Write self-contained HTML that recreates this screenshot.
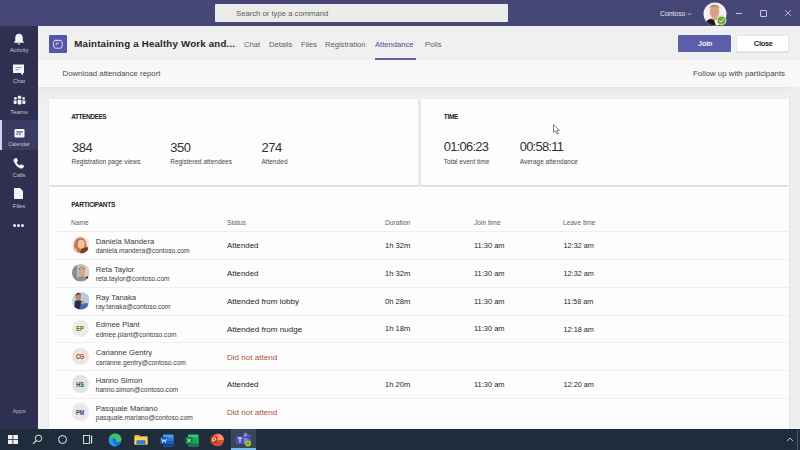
<!DOCTYPE html>
<html><head><meta charset="utf-8"><style>
html,body{margin:0;padding:0;width:800px;height:450px;overflow:hidden;background:#f3f2f1;}
body{position:relative;font-family:"Liberation Sans",sans-serif;}
.t{position:absolute;white-space:nowrap;line-height:1;}
.r{position:absolute;}
</style></head><body>
<div class="r" style="left:0px;top:0px;width:800px;height:26px;background:#454675;"></div>
<div class="r" style="left:215px;top:4px;width:293px;height:18px;background:#ebebeb;border-radius:1px;"></div>
<div class="t" style="left:236px;top:9.98px;font-size:7.7px;color:#5c5c5c;font-weight:400;">Search or type a command</div>
<div class="t" style="left:660px;top:10.54px;font-size:6.8px;color:#e6e6f2;font-weight:400;">Contoso</div>
<svg class="r" style="left:687px;top:12px" width="5" height="4" viewBox="0 0 5 4"><path d="M0.5 1 L2.5 3 L4.5 1" stroke="#d4d4e8" stroke-width="0.7" fill="none"/></svg>
<svg class="r" style="left:702.5px;top:1.5px" width="24" height="24" viewBox="0 0 24 24"><defs><clipPath id="av"><circle cx="12" cy="12" r="11.5"/></clipPath></defs><g clip-path="url(#av)"><rect width="24" height="24" fill="#f4f1ef"/><ellipse cx="11.5" cy="10" rx="4.8" ry="6" fill="#dca083"/><path d="M6.5 7 Q7 2.5 11.5 2.8 Q16 2.5 16.5 7 Q14.5 4.5 11.5 4.8 Q8.5 4.5 6.5 7Z" fill="#b9876a"/><path d="M2 24 L4 18.5 Q8 15.5 11 17.5 L13 24 Z" fill="#1f1a1a"/><path d="M9 15 Q11.5 17.5 14.5 15 L15 18 L9.5 18 Z" fill="#d49a7c"/></g></svg>
<svg class="r" style="left:715.5px;top:14.5px" width="11" height="11" viewBox="0 0 11 11"><circle cx="5.5" cy="5.5" r="5" fill="#cfd9a8"/><circle cx="5.5" cy="5.5" r="3.8" fill="#6bae3a"/><path d="M3.6 5.6 L5 7 L7.6 4.2" stroke="#f0f0e0" stroke-width="0.9" fill="none"/></svg>
<div class="r" style="left:736px;top:13px;width:6px;height:1px;background:#c8c8dc;"></div>
<div class="r" style="left:760px;top:10px;width:7px;height:7px;background:transparent;border:0.8px solid #c8c8dc;box-sizing:border-box;border-radius:1px;"></div>
<svg class="r" style="left:784px;top:9px" width="8" height="8" viewBox="0 0 8 8"><path d="M1 1 L7 7 M7 1 L1 7" stroke="#d0d0e2" stroke-width="0.8"/></svg>
<div class="r" style="left:0px;top:26px;width:38px;height:403px;background:#2f304f;"></div>
<div class="r" style="left:2px;top:120px;width:36px;height:30px;background:#3a3b60;"></div>
<div class="r" style="left:0px;top:120px;width:2px;height:30px;background:#d0d1f4;"></div>
<div class="t" style="left:19px;transform:translateX(-50%);top:48.01px;font-size:5.9px;color:#c4c4d8;font-weight:400;">Activity</div>
<div class="t" style="left:19px;transform:translateX(-50%);top:79.01px;font-size:5.9px;color:#c4c4d8;font-weight:400;">Chat</div>
<div class="t" style="left:19px;transform:translateX(-50%);top:110.01px;font-size:5.9px;color:#c4c4d8;font-weight:400;">Teams</div>
<div class="t" style="left:19px;transform:translateX(-50%);top:142.47px;font-size:5.35px;color:#c4c4d8;font-weight:400;">Calendar</div>
<div class="t" style="left:19px;transform:translateX(-50%);top:173.01px;font-size:5.9px;color:#c4c4d8;font-weight:400;">Calls</div>
<div class="t" style="left:19px;transform:translateX(-50%);top:204.01px;font-size:5.9px;color:#c4c4d8;font-weight:400;">Files</div>
<div class="t" style="left:19px;transform:translateX(-50%);top:408.79px;font-size:5.8px;color:#b4b4c8;font-weight:400;">Apps</div>
<svg class="r" style="left:13px;top:33px" width="12" height="13" viewBox="0 0 12 13"><path d="M6 0.8 C3.4 0.8 2.2 2.8 2.2 5.2 L2.2 7.8 L0.8 9.8 L11.2 9.8 L9.8 7.8 L9.8 5.2 C9.8 2.8 8.6 0.8 6 0.8 Z" fill="#f4f4f8"/><path d="M4.3 10.6 Q6 12.8 7.7 10.6 Z" fill="#f4f4f8"/></svg>
<svg class="r" style="left:12px;top:63px" width="13" height="14" viewBox="0 0 13 14"><path d="M1 1.5 L12 1.5 L12 10 L11 10 L11 12.5 L8.5 10 L1 10 Z" fill="#f4f4f8"/><rect x="3.5" y="4" width="6" height="1" fill="#9a9ab5"/><rect x="3.5" y="6.2" width="4" height="1" fill="#9a9ab5"/></svg>
<svg class="r" style="left:13px;top:95px" width="13" height="11" viewBox="0 0 13 11"><circle cx="6.5" cy="2.2" r="1.8" fill="#f4f4f8"/><circle cx="2.4" cy="3.4" r="1.4" fill="#f4f4f8"/><circle cx="10.6" cy="3.4" r="1.4" fill="#f4f4f8"/><path d="M4.6 4.8 L8.4 4.8 L8.4 8.8 Q6.5 10.8 4.6 8.8 Z" fill="#f4f4f8"/><path d="M0.6 5.6 L3.6 5.6 L3.6 8.6 Q2 9.8 0.6 8.2 Z" fill="#f4f4f8"/><path d="M9.4 5.6 L12.4 5.6 L12.4 8.2 Q11 9.8 9.4 8.6 Z" fill="#f4f4f8"/></svg>
<svg class="r" style="left:13.5px;top:127.5px" width="11" height="10" viewBox="0 0 11 10"><rect x="0.5" y="1" width="10" height="8.6" rx="1.3" fill="#f4f4f8"/><rect x="2.4" y="3.4" width="6.2" height="1.1" fill="#3a3b60"/><rect x="2.4" y="5.6" width="1.8" height="1.1" fill="#3a3b60"/><rect x="5" y="5.6" width="1.8" height="1.1" fill="#3a3b60"/></svg>
<svg class="r" style="left:12px;top:157px" width="13" height="13" viewBox="0 0 13 13"><path d="M2.5 1.5 L4.8 1 L6 4 L4.6 5.2 Q5.6 7.6 7.8 8.6 L9 7.2 L12 8.6 L11.4 10.8 Q10.4 12 8.6 11.4 Q3.4 9.4 1.6 4 Q1.2 2.4 2.5 1.5 Z" fill="#f4f4f8"/></svg>
<svg class="r" style="left:13px;top:187px" width="11" height="13" viewBox="0 0 11 13"><path d="M1 1 L7 1 L10 4 L10 12 L1 12 Z" fill="#f4f4f8"/></svg>
<div class="r" style="left:13.0px;top:224px;width:3px;height:3px;border-radius:50%;background:#f4f4f8"></div>
<div class="r" style="left:17.2px;top:224px;width:3px;height:3px;border-radius:50%;background:#f4f4f8"></div>
<div class="r" style="left:21.4px;top:224px;width:3px;height:3px;border-radius:50%;background:#f4f4f8"></div>
<div class="r" style="left:38px;top:26px;width:762px;height:403px;background:#f0f0f0;"></div>
<div class="r" style="left:38px;top:26px;width:762px;height:34px;background:#f0f0f0;"></div>
<div class="r" style="left:49px;top:35px;width:17.5px;height:17.5px;background:#5457a8;border-radius:1px;"></div>
<svg class="r" style="left:49px;top:35px" width="18" height="18" viewBox="0 0 18 18"><rect x="4.6" y="5.4" width="8.6" height="7.8" rx="2" fill="none" stroke="#e6e4f4" stroke-width="0.9"/><path d="M7 4.6 L7 6.2 M10.8 4.6 L10.8 6.2" stroke="#e6e4f4" stroke-width="0.9"/><path d="M7.2 8.2 L7.2 10.4 M7.2 8.2 L10.2 8.2" stroke="#e6e4f4" stroke-width="0.8"/></svg>
<div class="t" style="left:74.3px;top:38.99px;font-size:9.7px;color:#252423;font-weight:700;letter-spacing:0.2px;">Maintaining a Healthy Work and...</div>
<div class="t" style="left:244px;top:40.87px;font-size:7.6px;color:#616161;font-weight:400;">Chat</div>
<div class="t" style="left:269px;top:40.87px;font-size:7.6px;color:#616161;font-weight:400;">Details</div>
<div class="t" style="left:301px;top:40.87px;font-size:7.6px;color:#616161;font-weight:400;">Files</div>
<div class="t" style="left:325px;top:40.87px;font-size:7.6px;color:#616161;font-weight:400;">Registration</div>
<div class="t" style="left:375px;top:40.87px;font-size:7.6px;color:#4b4d8a;font-weight:400;">Attendance</div>
<div class="t" style="left:425px;top:40.87px;font-size:7.6px;color:#616161;font-weight:400;">Polls</div>
<div class="r" style="left:375px;top:58px;width:41px;height:2px;background:#6264a7;"></div>
<div class="r" style="left:678px;top:35px;width:53px;height:17px;background:#5b5ea8;border-radius:1px;"></div>
<div class="t" style="left:705.2px;transform:translateX(-50%);top:40.31px;font-size:7.2px;color:#f4f4ff;font-weight:700;letter-spacing:-0.15px;">Join</div>
<div class="r" style="left:736px;top:35px;width:53px;height:17px;background:#ffffff;border:1px solid #e6e6e6;box-sizing:border-box;border-radius:1px;box-shadow:0 1px 1px rgba(0,0,0,0.08);"></div>
<div class="t" style="left:763.2px;transform:translateX(-50%);top:40.05px;font-size:7.5px;color:#252423;font-weight:700;letter-spacing:-0.35px;">Close</div>
<div class="r" style="left:38px;top:60px;width:762px;height:27px;background:#f8f8f9;"></div>
<div class="t" style="left:62.5px;top:70.40px;font-size:7.8px;color:#4a4948;font-weight:400;">Download attendance report</div>
<div class="t" style="right:15px;top:70.35px;font-size:7.85px;color:#4a4948;font-weight:400;">Follow up with participants</div>
<div class="r" style="left:38px;top:87px;width:762px;height:342px;background:linear-gradient(#e2e2e2 0px,#eaeaea 2px,#eeeeee 6px,#efefef 12px,#f0f0f0 20px);"></div>
<div class="r" style="left:789px;top:87px;width:11px;height:342px;background:#eeeeee;"></div>
<div class="r" style="left:49px;top:99px;width:369px;height:86px;background:#fdfdfd;box-shadow:0 1px 2px rgba(0,0,0,0.12);"></div>
<div class="r" style="left:421px;top:99px;width:368px;height:86px;background:#fdfdfd;box-shadow:0 1px 2px rgba(0,0,0,0.12);"></div>
<div class="r" style="left:49px;top:187px;width:740px;height:242px;background:#fdfdfd;box-shadow:0 1px 2px rgba(0,0,0,0.12);"></div>
<div class="t" style="left:71.2px;top:114.40px;font-size:6.5px;color:#252423;font-weight:700;letter-spacing:-0.42px;">ATTENDEES</div>
<div class="t" style="left:443.8px;top:114.20px;font-size:6.5px;color:#252423;font-weight:700;letter-spacing:-0.33px;">TIME</div>
<div class="t" style="left:72px;top:141.20px;font-size:13.0px;color:#323130;font-weight:400;letter-spacing:-0.5px;">384</div>
<div class="t" style="left:71.5px;top:158.50px;font-size:6.5px;color:#484644;font-weight:400;">Registration page views</div>
<div class="t" style="left:170.2px;top:141.20px;font-size:13.0px;color:#323130;font-weight:400;letter-spacing:-0.5px;">350</div>
<div class="t" style="left:170.2px;top:158.50px;font-size:6.5px;color:#484644;font-weight:400;">Registered attendees</div>
<div class="t" style="left:261.5px;top:141.20px;font-size:13.0px;color:#323130;font-weight:400;letter-spacing:-0.5px;">274</div>
<div class="t" style="left:261.5px;top:158.50px;font-size:6.5px;color:#484644;font-weight:400;">Attended</div>
<div class="t" style="left:443.8px;top:141.28px;font-size:12.9px;color:#323130;font-weight:400;letter-spacing:-0.72px;">01:06:23</div>
<div class="t" style="left:443.8px;top:158.50px;font-size:6.5px;color:#484644;font-weight:400;">Total event time</div>
<div class="t" style="left:519.7px;top:141.28px;font-size:12.9px;color:#323130;font-weight:400;letter-spacing:-0.72px;">00:58:11</div>
<div class="t" style="left:519.7px;top:158.50px;font-size:6.5px;color:#484644;font-weight:400;">Average attendance</div>
<div class="t" style="left:71.3px;top:202.10px;font-size:6.5px;color:#252423;font-weight:700;letter-spacing:-0.28px;">PARTICIPANTS</div>
<div class="t" style="left:71px;top:219.87px;font-size:6.65px;color:#605e5c;font-weight:400;">Name</div>
<div class="t" style="left:227px;top:219.87px;font-size:6.65px;color:#605e5c;font-weight:400;">Status</div>
<div class="t" style="left:385px;top:219.87px;font-size:6.65px;color:#605e5c;font-weight:400;">Duration</div>
<div class="t" style="left:474px;top:219.87px;font-size:6.65px;color:#605e5c;font-weight:400;">Join time</div>
<div class="t" style="left:563px;top:219.87px;font-size:6.65px;color:#605e5c;font-weight:400;">Leave time</div>
<div class="r" style="left:56px;top:231px;width:733px;height:1px;background:#eeeeee;"></div>
<svg class="r" style="left:71.5px;top:236.4px" width="17.5" height="17.5" viewBox="0 0 18 18"><defs><clipPath id="c0"><circle cx="9" cy="9" r="9"/></clipPath></defs><g clip-path="url(#c0)"><rect width="18" height="18" fill="#eee6e2"/><ellipse cx="8.5" cy="9.5" rx="6.5" ry="8" fill="#c27a4c"/><ellipse cx="9.5" cy="8.5" rx="3.6" ry="4.6" fill="#f0c4a4"/><path d="M3 6 Q9 0 15 6 L13 4 Q9 2 5 4 Z" fill="#c77a48"/><path d="M10 13 L16 11 L18 18 L8 18 Z" fill="#7a3e22"/><path d="M0 12 L5 13 L4 18 L0 18Z" fill="#d9c4b4"/></g></svg>
<div class="t" style="left:95.7px;top:237.98px;font-size:7.7px;color:#3b3a39;font-weight:400;">Daniela Mandera</div>
<div class="t" style="left:95.7px;top:248.47px;font-size:6.65px;color:#403f3e;font-weight:400;">daniela.mandera@contoso.com</div>
<div class="t" style="left:227px;top:241.85px;font-size:7.85px;color:#252423;font-weight:400;">Attended</div>
<div class="t" style="left:385px;top:241.97px;font-size:7.6px;color:#252423;font-weight:400;">1h 32m</div>
<div class="t" style="left:474px;top:242.09px;font-size:7.45px;color:#252423;font-weight:400;">11:30 am</div>
<div class="t" style="left:563.5px;top:242.22px;font-size:7.3px;color:#252423;font-weight:400;">12:32 am</div>
<div class="r" style="left:56px;top:259px;width:733px;height:1px;background:#efefef;"></div>
<svg class="r" style="left:71.5px;top:264.2px" width="17.5" height="17.5" viewBox="0 0 18 18"><defs><clipPath id="c1"><circle cx="9" cy="9" r="9"/></clipPath></defs><g clip-path="url(#c1)"><rect width="18" height="18" fill="#bdbdbd"/><rect x="0" y="0" width="5" height="18" fill="#8a8a8a"/><rect x="13" y="3" width="5" height="9" fill="#cfcfcf"/><ellipse cx="10" cy="8.5" rx="3.3" ry="4.2" fill="#d8a285"/><path d="M6.5 6 Q10 1.5 13.5 6 L13 4.5 Q10 2.5 7 4.5 Z" fill="#3b2e2a"/><path d="M4 18 Q5 12.5 10 12.5 Q15 12.5 16 18 Z" fill="#8f8f8f"/><circle cx="15.5" cy="14" r="1.2" fill="#222"/></g></svg>
<div class="t" style="left:95.7px;top:265.78px;font-size:7.7px;color:#3b3a39;font-weight:400;">Reta Taylor</div>
<div class="t" style="left:95.7px;top:276.27px;font-size:6.65px;color:#403f3e;font-weight:400;">reta.taylor@contoso.com</div>
<div class="t" style="left:227px;top:269.65px;font-size:7.85px;color:#252423;font-weight:400;">Attended</div>
<div class="t" style="left:385px;top:269.77px;font-size:7.6px;color:#252423;font-weight:400;">1h 32m</div>
<div class="t" style="left:474px;top:269.89px;font-size:7.45px;color:#252423;font-weight:400;">11:30 am</div>
<div class="t" style="left:563.5px;top:270.02px;font-size:7.3px;color:#252423;font-weight:400;">12:32 am</div>
<div class="r" style="left:56px;top:287px;width:733px;height:1px;background:#efefef;"></div>
<svg class="r" style="left:71.5px;top:292.0px" width="17.5" height="17.5" viewBox="0 0 18 18"><defs><clipPath id="c2"><circle cx="9" cy="9" r="9"/></clipPath></defs><g clip-path="url(#c2)"><rect width="18" height="18" fill="#c9d3e0"/><rect x="10" y="0" width="8" height="10" fill="#b9c7da"/><ellipse cx="6.5" cy="5.5" rx="2.8" ry="3.2" fill="#b88a6c"/><path d="M3.5 4.5 Q6 0.5 9.5 3.5 L9 2 Q6 0 4 2.5 Z" fill="#2c2420"/><path d="M2 18 L3 9 Q7 7.5 11 9.5 L12 18 Z" fill="#26304a"/><path d="M9 12 L16 11 L17 18 L8 18 Z" fill="#4a68b8"/><ellipse cx="11" cy="11" rx="2" ry="1.6" fill="#c99878"/></g></svg>
<div class="t" style="left:95.7px;top:293.58px;font-size:7.7px;color:#3b3a39;font-weight:400;">Ray Tanaka</div>
<div class="t" style="left:95.7px;top:304.07px;font-size:6.65px;color:#403f3e;font-weight:400;">ray.tanaka@contoso.com</div>
<div class="t" style="left:227px;top:298.09px;font-size:8.05px;color:#252423;font-weight:400;">Attended from lobby</div>
<div class="t" style="left:385px;top:297.57px;font-size:7.6px;color:#252423;font-weight:400;">0h 28m</div>
<div class="t" style="left:474px;top:297.69px;font-size:7.45px;color:#252423;font-weight:400;">11:30 am</div>
<div class="t" style="left:563.5px;top:297.82px;font-size:7.3px;color:#252423;font-weight:400;">11:58 am</div>
<div class="r" style="left:56px;top:315px;width:733px;height:1px;background:#efefef;"></div>
<div class="r" style="left:71.5px;top:319.8px;width:17.5px;height:17.5px;border-radius:50%;background:#ebebeb"></div>
<div class="t" style="left:80.4px;top:326.14px;font-size:6.8px;color:#498205;font-weight:700;transform:translateX(-50%) scaleX(0.82);letter-spacing:-0.1px;">EP</div>
<div class="t" style="left:95.7px;top:321.38px;font-size:7.7px;color:#3b3a39;font-weight:400;">Edmee Plant</div>
<div class="t" style="left:95.7px;top:331.87px;font-size:6.65px;color:#403f3e;font-weight:400;">edmee.plant@contoso.com</div>
<div class="t" style="left:227px;top:325.89px;font-size:8.05px;color:#252423;font-weight:400;">Attended from nudge</div>
<div class="t" style="left:385px;top:325.37px;font-size:7.6px;color:#252423;font-weight:400;">1h 18m</div>
<div class="t" style="left:474px;top:325.49px;font-size:7.45px;color:#252423;font-weight:400;">11:30 am</div>
<div class="t" style="left:563.5px;top:325.62px;font-size:7.3px;color:#252423;font-weight:400;">12:18 am</div>
<div class="r" style="left:56px;top:342px;width:733px;height:1px;background:#efefef;"></div>
<div class="r" style="left:71.5px;top:347.6px;width:17.5px;height:17.5px;border-radius:50%;background:#f1e2dc"></div>
<div class="t" style="left:80.4px;top:353.94px;font-size:6.8px;color:#8e4a2a;font-weight:700;transform:translateX(-50%) scaleX(0.82);letter-spacing:-0.1px;">CG</div>
<div class="t" style="left:95.7px;top:349.18px;font-size:7.7px;color:#3b3a39;font-weight:400;">Carianne Gentry</div>
<div class="t" style="left:95.7px;top:359.67px;font-size:6.65px;color:#403f3e;font-weight:400;">carianne.gentry@contoso.com</div>
<div class="t" style="left:227px;top:353.69px;font-size:8.05px;color:#a8503a;font-weight:400;">Did not attend</div>
<div class="r" style="left:56px;top:370px;width:733px;height:1px;background:#efefef;"></div>
<div class="r" style="left:71.5px;top:375.4px;width:17.5px;height:17.5px;border-radius:50%;background:#e1e3e6"></div>
<div class="t" style="left:80.4px;top:381.74px;font-size:6.8px;color:#0b6a0b;font-weight:700;transform:translateX(-50%) scaleX(0.82);letter-spacing:-0.1px;">HS</div>
<div class="t" style="left:95.7px;top:376.98px;font-size:7.7px;color:#3b3a39;font-weight:400;">Hanno Simon</div>
<div class="t" style="left:95.7px;top:387.47px;font-size:6.65px;color:#403f3e;font-weight:400;">hanno.simon@contoso.com</div>
<div class="t" style="left:227px;top:380.85px;font-size:7.85px;color:#252423;font-weight:400;">Attended</div>
<div class="t" style="left:385px;top:380.97px;font-size:7.6px;color:#252423;font-weight:400;">1h 20m</div>
<div class="t" style="left:474px;top:381.09px;font-size:7.45px;color:#252423;font-weight:400;">11:30 am</div>
<div class="t" style="left:563.5px;top:381.22px;font-size:7.3px;color:#252423;font-weight:400;">12:20 am</div>
<div class="r" style="left:56px;top:398px;width:733px;height:1px;background:#efefef;"></div>
<div class="r" style="left:71.5px;top:403.2px;width:17.5px;height:17.5px;border-radius:50%;background:#eee6e8"></div>
<div class="t" style="left:80.4px;top:409.54px;font-size:6.8px;color:#3f3d8a;font-weight:700;transform:translateX(-50%) scaleX(0.82);letter-spacing:-0.1px;">PM</div>
<div class="t" style="left:95.7px;top:404.78px;font-size:7.7px;color:#3b3a39;font-weight:400;">Pasquale Mariano</div>
<div class="t" style="left:95.7px;top:415.27px;font-size:6.65px;color:#403f3e;font-weight:400;">pasquale.mariano@contoso.com</div>
<div class="t" style="left:227px;top:409.29px;font-size:8.05px;color:#a8503a;font-weight:400;">Did not attend</div>
<svg class="r" style="left:553px;top:124px" width="7" height="11" viewBox="0 0 7 11"><path d="M0.5 0.5 L0.5 8.5 L2.5 6.8 L4 10 L5.2 9.4 L3.8 6.3 L6.3 6.3 Z" fill="#fff" stroke="#333" stroke-width="0.6"/></svg>
<div class="r" style="left:0px;top:429px;width:800px;height:21px;background:#1f2c3c;"></div>
<div class="r" style="left:797px;top:430px;width:1px;height:20px;background:#4a5868;"></div>
<svg class="r" style="left:8px;top:435px" width="10" height="9" viewBox="0 0 10 9"><rect x="0" y="0" width="4.5" height="4" fill="#f0f0f0"/><rect x="5.3" y="0" width="4.7" height="4" fill="#f0f0f0"/><rect x="0" y="4.8" width="4.5" height="4.2" fill="#f0f0f0"/><rect x="5.3" y="4.8" width="4.7" height="4.2" fill="#f0f0f0"/></svg>
<svg class="r" style="left:32px;top:434px" width="11" height="11" viewBox="0 0 11 11"><circle cx="6.5" cy="4.3" r="3.2" fill="none" stroke="#e8e8e8" stroke-width="1"/><path d="M4.2 6.6 L1 9.8" stroke="#e8e8e8" stroke-width="1.1"/></svg>
<div class="r" style="left:58px;top:435px;width:9px;height:9px;border-radius:50%;border:1.3px solid #f0f0f0;box-sizing:border-box"></div>
<svg class="r" style="left:83px;top:435px" width="10" height="9" viewBox="0 0 10 9"><rect x="0.5" y="0.5" width="6" height="8" fill="none" stroke="#e8e8e8" stroke-width="0.9"/><rect x="8" y="0.5" width="1.2" height="8" fill="#e8e8e8"/></svg>
<svg class="r" style="left:107.5px;top:433px" width="14" height="14" viewBox="0 0 14 14"><circle cx="7" cy="7" r="6.5" fill="#1677d2"/><path d="M1 6 Q2 0.5 7.5 0.5 Q13 0.8 13.5 6.5 Q13 9 10 9 Q7.5 9 8 6.5 Q7.5 4.5 5 4.8 Q2 5.5 1 6 Z" fill="#3fc46a"/><path d="M1 6.5 Q3 4.5 5.5 5.2 Q4 7 5 9.5 Q6 12.5 9.5 13 Q5 14.5 2 11 Q0.5 9 1 6.5Z" fill="#2a9fe8"/></svg>
<svg class="r" style="left:133.5px;top:434px" width="14" height="11" viewBox="0 0 14 11"><path d="M0.5 1 L5 1 L6.2 2.2 L13.5 2.2 L13.5 10.5 L0.5 10.5 Z" fill="#f0b72f"/><rect x="0.5" y="3.2" width="13" height="7.3" fill="#fcd25a"/><rect x="2.5" y="6.2" width="9" height="4.3" fill="#2f7fd3"/></svg>
<svg class="r" style="left:159.5px;top:433.5px" width="14" height="13" viewBox="0 0 14 13"><rect x="3" y="0.5" width="10.5" height="12" rx="0.8" fill="#41a5ee"/><rect x="3" y="3.5" width="10.5" height="3" fill="#2b7cd3"/><rect x="3" y="6.5" width="10.5" height="3" fill="#185abd"/><rect x="3" y="9.5" width="10.5" height="3" fill="#103f91"/><rect x="0.5" y="3" width="7" height="7" rx="0.6" fill="#185abd"/><path d="M1.6 4.6 L2.6 8.4 L4 5.6 L5.4 8.4 L6.4 4.6" stroke="#fff" stroke-width="0.8" fill="none"/></svg>
<svg class="r" style="left:184.5px;top:433.5px" width="14" height="13" viewBox="0 0 14 13"><rect x="3" y="0.5" width="10.5" height="12" rx="0.8" fill="#33c481"/><rect x="3" y="3.5" width="10.5" height="6" fill="#21a366"/><rect x="3" y="9.5" width="10.5" height="3" fill="#107c41"/><rect x="0.5" y="3" width="7" height="7" rx="0.6" fill="#107c41"/><path d="M2.2 4.6 L5.8 8.4 M5.8 4.6 L2.2 8.4" stroke="#fff" stroke-width="0.9"/></svg>
<svg class="r" style="left:210px;top:433px" width="14" height="14" viewBox="0 0 14 14"><circle cx="7.5" cy="7" r="6.2" fill="#ed6c47"/><path d="M7.5 0.8 A6.2 6.2 0 0 1 13.7 7 L7.5 7 Z" fill="#ff8f6b"/><path d="M1.3 7 A6.2 6.2 0 0 0 13.7 7 Z" fill="#d35230"/><rect x="0.5" y="3.5" width="7" height="7" rx="0.6" fill="#c43e1c"/><path d="M2.8 9 L2.8 5 L4.6 5 Q5.8 5 5.8 6.2 Q5.8 7.4 4.6 7.4 L2.8 7.4" stroke="#fff" stroke-width="0.8" fill="none"/></svg>
<div class="r" style="left:231px;top:429px;width:25px;height:21px;background:#3a4656;"></div>
<div class="r" style="left:231px;top:448px;width:25px;height:2px;background:#76b9ed;"></div>
<svg class="r" style="left:235px;top:432px" width="17" height="15" viewBox="0 0 17 15"><circle cx="10.5" cy="3" r="2.2" fill="#7b83eb"/><circle cx="14.2" cy="4" r="1.6" fill="#5059c9"/><path d="M7 6 L13 6 L13 10.5 Q10 13 7 10.5 Z" fill="#7b83eb"/><path d="M12.5 6.5 L16 6.5 L16 9.5 Q14 11 12.5 10 Z" fill="#5059c9"/><rect x="1" y="4" width="8" height="8" rx="0.7" fill="#4b53bc"/><path d="M2.8 6 L7.2 6 M5 6 L5 10.5" stroke="#fff" stroke-width="1"/><circle cx="13" cy="11.5" r="3" fill="#c4b454"/><circle cx="13" cy="11.5" r="1.8" fill="#6bb700"/></svg>
<svg class="r" style="left:786px;top:437px" width="8" height="5" viewBox="0 0 8 5"><path d="M1 4 L4 1 L7 4" stroke="#e0e0e0" stroke-width="0.8" fill="none"/></svg>
</body></html>
